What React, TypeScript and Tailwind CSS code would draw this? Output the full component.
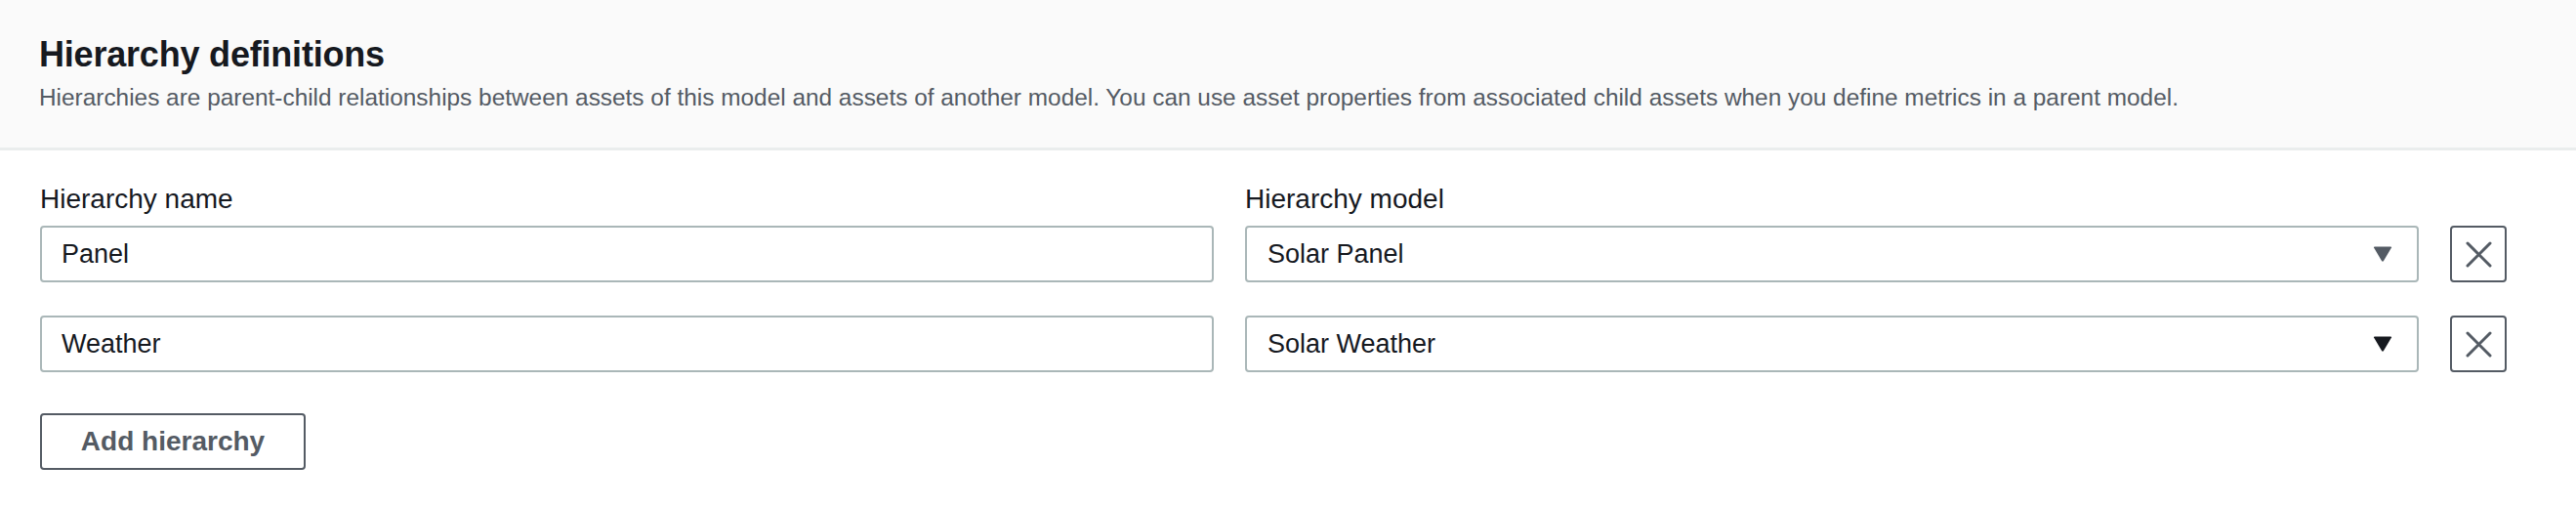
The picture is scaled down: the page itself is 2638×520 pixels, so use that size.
import { Fragment } from "react";

const rows = [
  { name: "Panel", model: "Solar Panel", caret: "#545b64" },
  { name: "Weather", model: "Solar Weather", caret: "#16191f" },
];

function Caret({ color }: { color: string }) {
  return (
    <svg width="20" height="16" viewBox="0 0 20 16" className="shrink-0">
      <path d="M1 1.5 Q0.5 0.5 2 0.5 H18 Q19.5 0.5 19 1.5 L11 15 Q10 16.3 9 15 Z" fill={color} />
    </svg>
  );
}

function CloseIcon() {
  return (
    <svg width="27" height="27" viewBox="0 0 27 27" fill="none" stroke="#545b64" strokeWidth="3" strokeLinecap="round">
      <path d="M2 2 L25 25 M25 2 L2 25" />
    </svg>
  );
}

export default function App() {
  return (
    <div className="w-full min-h-[520px] bg-white font-['Liberation_Sans',Arial,sans-serif] text-[#16191f]">
      {/* Header */}
      <div className="h-[154px] bg-[#fafafa] border-b-[3px] border-[#eaeded] px-[40px] pt-[34px]">
        <h2 className="text-[36px] leading-[44px] font-bold tracking-[-0.2px]">Hierarchy definitions</h2>
        <p className="mt-[6px] text-[24.4px] leading-[32px] text-[#545b64]">
          Hierarchies are parent-child relationships between assets of this model and assets of another
          model. You can use asset properties from associated child assets when you define metrics in a
          parent model.
        </p>
      </div>

      {/* Body */}
      <div className="pl-[41px] pr-[71px] pt-[34px]">
        <div className="grid grid-cols-[1fr_1fr_58px] gap-x-[32px] gap-y-[34px]">
          <div className="text-[28px] leading-[32px] -mb-[23px]">Hierarchy name</div>
          <div className="text-[28px] leading-[32px] -mb-[23px]">Hierarchy model</div>
          <div />
          {rows.map((row) => (
            <Fragment key={row.name}>
              <div className="h-[58px] flex items-center border-2 border-[#aab7b8] rounded-[4px] pl-[20px] text-[27px]">
                {row.name}
              </div>
              <div className="h-[58px] flex items-center justify-between border-2 border-[#aab7b8] rounded-[4px] pl-[21px] pr-[25px] text-[27px]">
                <span>{row.model}</span>
                <Caret color={row.caret} />
              </div>
              <button className="h-[58px] w-[58px] flex items-center justify-center border-2 border-[#545b64] rounded-[4px]">
                <CloseIcon />
              </button>
            </Fragment>
          ))}
        </div>

        <button className="mt-[42px] h-[58px] w-[272px] border-2 border-[#545b64] rounded-[4px] text-[28px] font-bold text-[#545b64]">
          Add hierarchy
        </button>
      </div>
    </div>
  );
}
